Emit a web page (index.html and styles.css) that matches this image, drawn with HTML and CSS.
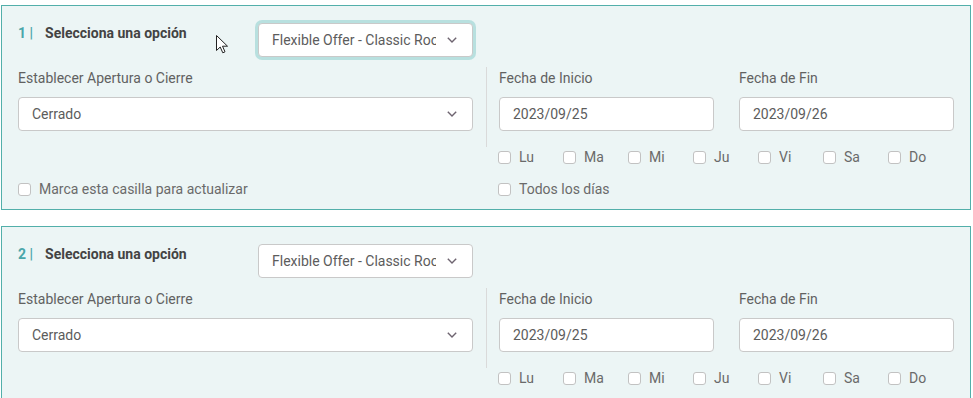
FILE: index.html
```html
<!DOCTYPE html>
<html lang="es">
<head>
    <meta charset="UTF-8">
    <meta name="viewport" content="width=device-width, initial-scale=1.0">
    <title>Apertura y Cierre</title>
    <link rel="stylesheet" href="styles.css">
</head>
<body>

    <!-- Option 1 -->
    <div class="card">
        <div class="card-head">
            <div class="card-title"><span class="num">1 |</span><span class="title">Selecciona una opción</span></div>
            <div class="select select-offer focused">
                <span class="select-text">Flexible Offer - Classic Room</span>
                <svg class="chevron" width="10" height="6" viewBox="0 0 10 6"><path d="M0.8 0.8 L5 5 L9.2 0.8" fill="none" stroke="#6e6470" stroke-width="1.4"/></svg>
            </div>
        </div>
        <div class="card-body">
            <div class="field">
                <label>Establecer Apertura o Cierre</label>
                <div class="select">
                    <span class="select-text">Cerrado</span>
                    <svg class="chevron" width="10" height="6" viewBox="0 0 10 6"><path d="M0.8 0.8 L5 5 L9.2 0.8" fill="none" stroke="#6e6470" stroke-width="1.4"/></svg>
                </div>
            </div>
            <div class="dates">
                <div class="field">
                    <label>Fecha de Inicio</label>
                    <div class="input">2023/09/25</div>
                </div>
                <div class="field">
                    <label>Fecha de Fin</label>
                    <div class="input">2023/09/26</div>
                </div>
            </div>
            <div class="update">
                <label class="check"><span class="box"></span>Marca esta casilla para actualizar</label>
            </div>
            <div class="days-block">
                <div class="days">
                    <label class="check"><span class="box"></span>Lu</label>
                    <label class="check"><span class="box"></span>Ma</label>
                    <label class="check"><span class="box"></span>Mi</label>
                    <label class="check"><span class="box"></span>Ju</label>
                    <label class="check"><span class="box"></span>Vi</label>
                    <label class="check"><span class="box"></span>Sa</label>
                    <label class="check"><span class="box"></span>Do</label>
                </div>
                <label class="check all"><span class="box"></span>Todos los días</label>
            </div>
        </div>
        <!-- mouse pointer from the capture -->
        <svg class="cursor" width="13" height="19" viewBox="0 0 13 19"><path d="M0.5 0.5 L0.5 15.5 L4.2 12 L6.8 17.8 L9 16.8 L6.5 11.2 L11.5 11.2 Z" fill="#fff" stroke="#222" stroke-width="1"/></svg>
    </div>

    <!-- Option 2 -->
    <div class="card">
        <div class="card-head">
            <div class="card-title"><span class="num">2 |</span><span class="title">Selecciona una opción</span></div>
            <div class="select select-offer">
                <span class="select-text">Flexible Offer - Classic Room</span>
                <svg class="chevron" width="10" height="6" viewBox="0 0 10 6"><path d="M0.8 0.8 L5 5 L9.2 0.8" fill="none" stroke="#6e6470" stroke-width="1.4"/></svg>
            </div>
        </div>
        <div class="card-body">
            <div class="field">
                <label>Establecer Apertura o Cierre</label>
                <div class="select">
                    <span class="select-text">Cerrado</span>
                    <svg class="chevron" width="10" height="6" viewBox="0 0 10 6"><path d="M0.8 0.8 L5 5 L9.2 0.8" fill="none" stroke="#6e6470" stroke-width="1.4"/></svg>
                </div>
            </div>
            <div class="dates">
                <div class="field">
                    <label>Fecha de Inicio</label>
                    <div class="input">2023/09/25</div>
                </div>
                <div class="field">
                    <label>Fecha de Fin</label>
                    <div class="input">2023/09/26</div>
                </div>
            </div>
            <div class="update">
                <label class="check"><span class="box"></span>Marca esta casilla para actualizar</label>
            </div>
            <div class="days-block">
                <div class="days">
                    <label class="check"><span class="box"></span>Lu</label>
                    <label class="check"><span class="box"></span>Ma</label>
                    <label class="check"><span class="box"></span>Mi</label>
                    <label class="check"><span class="box"></span>Ju</label>
                    <label class="check"><span class="box"></span>Vi</label>
                    <label class="check"><span class="box"></span>Sa</label>
                    <label class="check"><span class="box"></span>Do</label>
                </div>
                <label class="check all"><span class="box"></span>Todos los días</label>
            </div>
        </div>
    </div>

</body>
</html>
```

FILE: styles.css
```css
body {
    font-family: Roboto, "Liberation Sans", sans-serif;
    font-size: 14px;
    color: #616161;
    margin: 0;
    padding: 5px 2px 0 1px;
    background: #fff;
}

/* Card */
.card {
    position: relative;
    background: #ecf5f5;
    border: 1px solid #52afaa;
    padding: 17px 16px 10px 16px;
    margin-bottom: 16px;
}

.card-head {
    display: flex;
    align-items: flex-start;
}

.card-title {
    width: 240px;
    line-height: 20px;
    font-size: 14px;
    font-weight: bold;
}

.card-title .num {
    color: #4aa6aa;
    margin-right: 12px;
}

.card-title .title {
    color: #434343;
}

/* Selects and inputs */
.select, .input {
    display: flex;
    align-items: center;
    box-sizing: border-box;
    height: 34px;
    background: #fff;
    border: 1px solid #c9c9c9;
    border-radius: 4px;
    padding: 0 15px 0 13px;
    color: #5c5c5c;
}

.select-text {
    flex: 1;
    white-space: nowrap;
    overflow: hidden;
}

.select-offer {
    width: 215px;
}

.select-offer .select-text {
    margin-right: 11px;
}

.focused {
    box-shadow: 0 0 0 3px rgba(90, 186, 184, 0.35);
}

.chevron {
    flex-shrink: 0;
}

/* Body grid */
.card-body {
    display: grid;
    grid-template-columns: 455px 1fr;
    column-gap: 13px;
    margin-top: 10px;
}

.field label {
    display: block;
    line-height: 22px;
    margin-bottom: 8px;
}

.card-body > .field {
    padding-bottom: 16px;
}

.dates {
    display: flex;
    gap: 25px;
    border-left: 1px solid #dadada;
    padding: 0 0 16px 12px;
}

.dates .field {
    flex: 1;
}

.update {
    align-self: end;
}

.days-block {
    padding-left: 12px;
}

.days {
    display: flex;
    margin-bottom: 12px;
}

.days .check {
    width: 65px;
}

/* Checkboxes */
.check {
    display: flex;
    align-items: center;
    gap: 8px;
    line-height: 20px;
    color: #6a6a6a;
}

.box {
    box-sizing: border-box;
    width: 13px;
    height: 13px;
    background: #fff;
    border: 1px solid #c2c2c2;
    border-radius: 3px;
}

/* Mouse pointer */
.cursor {
    position: absolute;
    left: 214px;
    top: 29px;
}
```
